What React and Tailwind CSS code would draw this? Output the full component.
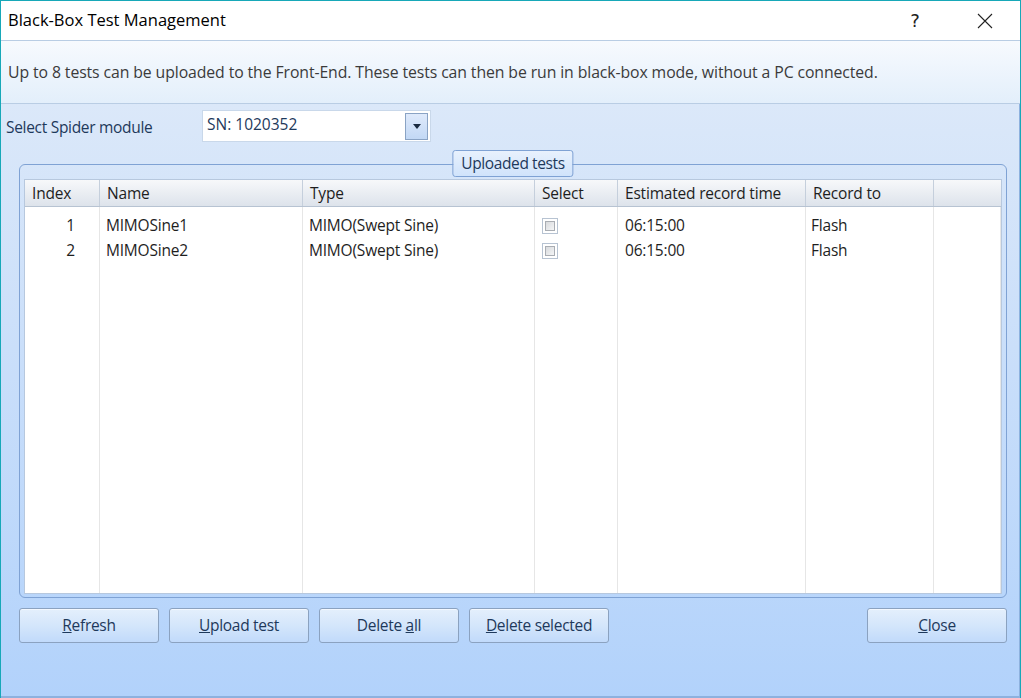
import { useState } from 'react'

const columns = [
  { key: 'index', label: 'Index', width: 'w-[75px]' },
  { key: 'name', label: 'Name', width: 'w-[203px]' },
  { key: 'type', label: 'Type', width: 'w-[232px]' },
  { key: 'select', label: 'Select', width: 'w-[83px]' },
  { key: 'time', label: 'Estimated record time', width: 'w-[188px]' },
  { key: 'target', label: 'Record to', width: 'w-[128px]' },
  { key: 'pad', label: '', width: 'flex-1' }
]

const tests = [
  { index: 1, name: 'MIMOSine1', type: 'MIMO(Swept Sine)', time: '06:15:00', target: 'Flash' },
  { index: 2, name: 'MIMOSine2', type: 'MIMO(Swept Sine)', time: '06:15:00', target: 'Flash' }
]

function Checkbox({ checked, onChange }) {
  return (
    <button
      onClick={onChange}
      className="w-[16px] h-[16px] border border-[#b7c3d2] bg-white flex items-center justify-center"
    >
      <span className="w-[10px] h-[10px] border border-[#a9adb3] bg-gradient-to-br from-[#d8dadd] to-[#f4f5f6] flex items-center justify-center">
        {checked && <span className="w-[5px] h-[5px] bg-[#2b4f85]" />}
      </span>
    </button>
  )
}

function DialogButton({ children, className = '' }) {
  return (
    <button
      className={`h-[35px] w-[140px] rounded-[3px] border border-[#8ba2c0] bg-gradient-to-b from-[#e4effc] via-[#d4e6fb] to-[#c1dafb] text-[15.5px] tracking-[-0.3px] text-[#1e395b] pt-[1px] shadow-[inset_0_1px_0_#f3f8ff] ${className}`}
    >
      {children}
    </button>
  )
}

export default function App() {
  const [selected, setSelected] = useState({})

  const toggle = (i) => setSelected(s => ({ ...s, [i]: !s[i] }))

  return (
    <div className="w-[1021px] h-[698px] flex flex-col border-l border-t border-r border-[#17a8b8] font-['Open_Sans','Noto_Sans',sans-serif] overflow-hidden">
      {/* title bar */}
      <div className="h-[39px] shrink-0 bg-white flex items-center pl-[7px]">
        <span className="text-[16.5px] text-black">Black-Box Test Management</span>
        <div className="ml-auto flex items-center h-full">
          <span className="w-[70px] text-center text-[18px] text-[#222] font-['DejaVu_Sans',sans-serif]">?</span>
          <span className="w-[70px] flex justify-center">
            <svg width="16" height="16" viewBox="0 0 16 16" fill="none" stroke="#222" strokeWidth="1.1">
              <path d="M1 1l14 14M15 1L1 15" />
            </svg>
          </span>
        </div>
      </div>

      {/* info band */}
      <div className="h-[64px] shrink-0 border-t border-b border-[#b9cde4] bg-gradient-to-b from-[#f7fafe] to-[#e3effb] flex items-center pl-[7px] pt-[2px]">
        <span className="text-[15.8px] text-[#3b3b3b] tracking-[-0.1px]">
          Up to 8 tests can be uploaded to the Front-End. These tests can then be run in black-box mode, without a PC connected.
        </span>
      </div>

      {/* body */}
      <div className="flex-1 flex flex-col bg-gradient-to-b from-[#dbe8f9] to-[#b2d2fb] border-b-2 border-r border-[#8eb1de] pt-[6px] pl-[18px] pr-[12px]">
        <div className="flex items-center h-[32px] -ml-[13px]">
          <span className="w-[196px] text-[15.5px] tracking-[-0.3px] text-[#1e395b] pt-[4px]">Select Spider module</span>
          <div className="w-[229px] h-[32px] bg-white border border-[#c9d8ea] flex items-center pl-[4px] pr-[2px]">
            <span className="text-[15.5px] text-[#1e395b] flex-1 pb-[2px]">SN: 1020352</span>
            <span className="w-[23px] h-[27px] border border-[#8aa3c4] bg-gradient-to-b from-[#dfeafb] to-[#c2d8f5] flex items-center justify-center">
              <svg width="8" height="5" viewBox="0 0 8 5"><path d="M0 0h8L4 5z" fill="#1a2a40" /></svg>
            </span>
          </div>
        </div>

        {/* group box */}
        <div className="relative mt-[22px] h-[434px] border border-[#7fa2d4] rounded-[6px] pt-[14px] px-[4px] pb-[3px] flex">
          <div className="absolute -top-[15px] left-1/2 -translate-x-1/2 h-[27px] px-[8px] rounded-[3px] border border-[#7fa2d4] bg-gradient-to-b from-[#e8f1fd] to-[#d0e3fb] flex items-center text-[15.5px] tracking-[-0.4px] text-[#1e395b] whitespace-nowrap">
            Uploaded tests
          </div>

          <div className="flex-1 flex flex-col bg-white border border-[#b7c8de]">
            <div className="h-[27px] flex bg-gradient-to-b from-[#f7f8fa] to-[#dde3eb] border-b border-[#b7c3d2]">
              {columns.map(c => (
                <div
                  key={c.key}
                  className={`${c.width} shrink-0 border-r border-[#c5cfdc] flex items-center pl-[7px] pt-[2px] text-[15.5px] tracking-[-0.2px] text-[#1e1e1e] last:border-r-0`}
                >
                  {c.label}
                </div>
              ))}
            </div>
            <div className="flex-1 flex relative">
              {columns.map(c => (
                <div key={c.key} className={`${c.width} shrink-0 border-r border-[#e6e6e6] last:border-r-0`} />
              ))}
              <div className="absolute inset-0 pt-[6px] flex flex-col">
                {tests.map(t => (
                  <div key={t.index} className="h-[25px] flex items-center text-[15.5px] tracking-[-0.2px] text-[#1e1e1e]">
                    <div className="w-[75px] shrink-0 text-right pr-[25px]">{t.index}</div>
                    <div className="w-[203px] shrink-0 pl-[6px]">{t.name}</div>
                    <div className="w-[232px] shrink-0 pl-[6px]">{t.type}</div>
                    <div className="w-[83px] shrink-0 pl-[7px] flex items-center">
                      <Checkbox checked={!!selected[t.index]} onChange={() => toggle(t.index)} />
                    </div>
                    <div className="w-[188px] shrink-0 pl-[7px]">{t.time}</div>
                    <div className="w-[128px] shrink-0 pl-[5px]">{t.target}</div>
                  </div>
                ))}
              </div>
            </div>
          </div>
        </div>

        {/* buttons */}
        <div className="flex items-center mt-[10px] gap-[10px]">
          <DialogButton><u>R</u>efresh</DialogButton>
          <DialogButton><u>U</u>pload test</DialogButton>
          <DialogButton>Delete <u>a</u>ll</DialogButton>
          <DialogButton><u>D</u>elete selected</DialogButton>
          <DialogButton className="ml-auto"><u>C</u>lose</DialogButton>
        </div>
      </div>
    </div>
  )
}
